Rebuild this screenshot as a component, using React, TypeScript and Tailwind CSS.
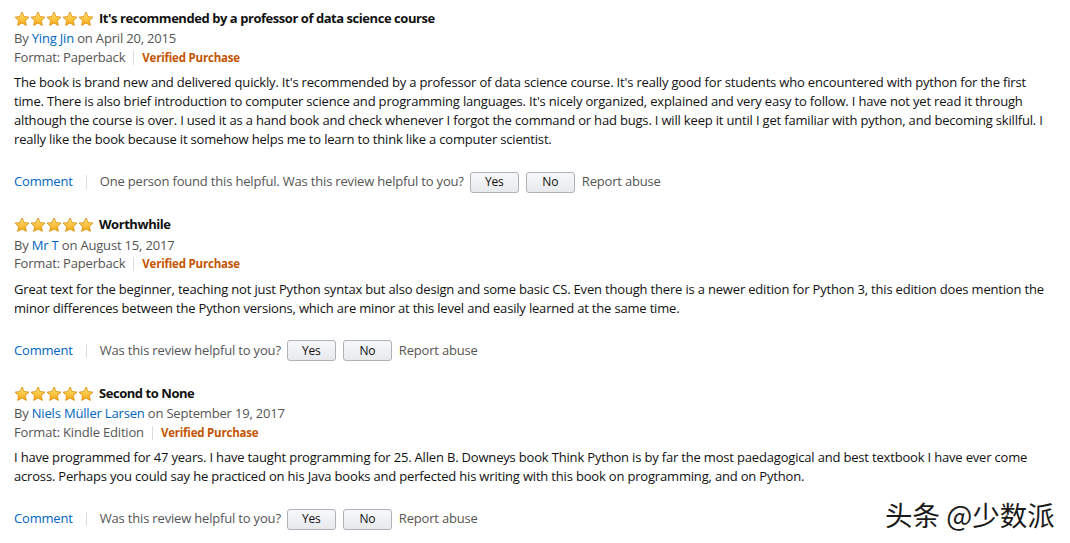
import React from 'react';

type Review = {
  title: string;
  author: string;
  date: string;
  format: string;
  body: string[];
  helpful?: string;
};

const reviews: Review[] = [
  {
    title: "It's recommended by a professor of data science course",
    author: 'Ying Jin',
    date: 'April 20, 2015',
    format: 'Paperback',
    body: [
      "The book is brand new and delivered quickly. It's recommended by a professor of data science course. It's really good for students who encountered with python for the first",
      "time. There is also brief introduction to computer science and programming languages. It's nicely organized, explained and very easy to follow. I have not yet read it through",
      'although the course is over. I used it as a hand book and check whenever I forgot the command or had bugs. I will keep it until I get familiar with python, and becoming skillful. I',
      'really like the book because it somehow helps me to learn to think like a computer scientist.',
    ],
    helpful: 'One person found this helpful. ',
  },
  {
    title: 'Worthwhile',
    author: 'Mr T',
    date: 'August 15, 2017',
    format: 'Paperback',
    body: [
      'Great text for the beginner, teaching not just Python syntax but also design and some basic CS. Even though there is a newer edition for Python 3, this edition does mention the',
      'minor differences between the Python versions, which are minor at this level and easily learned at the same time.',
    ],
  },
  {
    title: 'Second to None',
    author: 'Niels Müller Larsen',
    date: 'September 19, 2017',
    format: 'Kindle Edition',
    body: [
      'I have programmed for 47 years. I have taught programming for 25. Allen B. Downeys book Think Python is by far the most paedagogical and best textbook I have ever come',
      'across. Perhaps you could say he practiced on his Java books and perfected his writing with this book on programming, and on Python.',
    ],
  },
];

const Star = () => (
  <svg width="16" height="16" viewBox="0 0 24 24">
    <defs>
      <linearGradient id="sg" x1="0" y1="0" x2="0" y2="1">
        <stop offset="0" stopColor="#ffe27a" />
        <stop offset="1" stopColor="#f5a70f" />
      </linearGradient>
    </defs>
    <path
      d="M12 1.5l3.2 6.8 7.3.9-5.4 5.1 1.4 7.3L12 18l-6.5 3.6 1.4-7.3L1.5 9.2l7.3-.9z"
      fill="url(#sg)"
      stroke="#d98a06"
      strokeWidth="1.2"
      strokeLinejoin="round"
    />
  </svg>
);

const Btn = ({ label }: { label: string }) => (
  <button className="h-[21px] w-[49px] rounded-[3px] border border-[#adb1b8] bg-gradient-to-b from-[#f7f8fa] to-[#e7e9ec] text-[12px] text-[#111]">
    {label}
  </button>
);

const ReviewBlock = ({ r }: { r: Review }) => (
  <div className="flex flex-col">
    <div className="flex h-[19px] items-center">
      <div className="flex">
        <Star />
        <Star />
        <Star />
        <Star />
        <Star />
      </div>
      <span className="ml-[5px] font-bold tracking-[-0.45px] text-[#111]">{r.title}</span>
    </div>
    <div className="mt-[1px] h-[19px] leading-[19px] text-[#555]">
      By <span className="text-[#0066c0]">{r.author}</span> on {r.date}
    </div>
    <div className="flex h-[19px] items-center text-[#555]">
      <span>Format: {r.format}</span>
      <span className="mx-[8px] h-[14px] w-px bg-[#ddd]" />
      <span className="text-[11.5px] font-bold tracking-[-0.2px] text-[#c45500]">Verified Purchase</span>
    </div>
    <div className="mt-[6px] text-[#111]">
      {r.body.map((l, i) => (
        <div key={i} className="h-[19px] leading-[19px] whitespace-nowrap">
          {l}
        </div>
      ))}
    </div>
    <div className="mt-[22.5px] flex h-[21px] items-center text-[#555]">
      <span className="text-[#0066c0]">Comment</span>
      <span className="mx-[13px] h-[14px] w-px bg-[#ddd]" />
      <span>{r.helpful ?? ''}Was this review helpful to you?</span>
      <div className="ml-[6px] flex gap-[7px]">
        <Btn label="Yes" />
        <Btn label="No" />
      </div>
      <span className="ml-[7px]">Report abuse</span>
    </div>
  </div>
);

export default function App() {
  return (
    <div
      className="relative h-[543px] w-[1070px] overflow-hidden bg-white pl-[14px] pt-[9px] text-[13px] tracking-[-0.18px]"
      style={{ fontFamily: '"Open Sans", Arial, sans-serif' }}
    >
      <div className="flex flex-col gap-[23px]">
        {reviews.map((r, i) => (
          <ReviewBlock key={i} r={r} />
        ))}
      </div>
      <div
        className="absolute left-[885px] top-[494px] text-[27.5px] tracking-normal text-[#1a1a1a]"
        style={{ fontFamily: '"Noto Sans CJK SC", sans-serif', textShadow: '1px 1px 0 #fff, -1px -1px 0 #fff, 1px -1px 0 #fff, -1px 1px 0 #fff' }}
      >
        头条 @少数派
      </div>
    </div>
  );
}
